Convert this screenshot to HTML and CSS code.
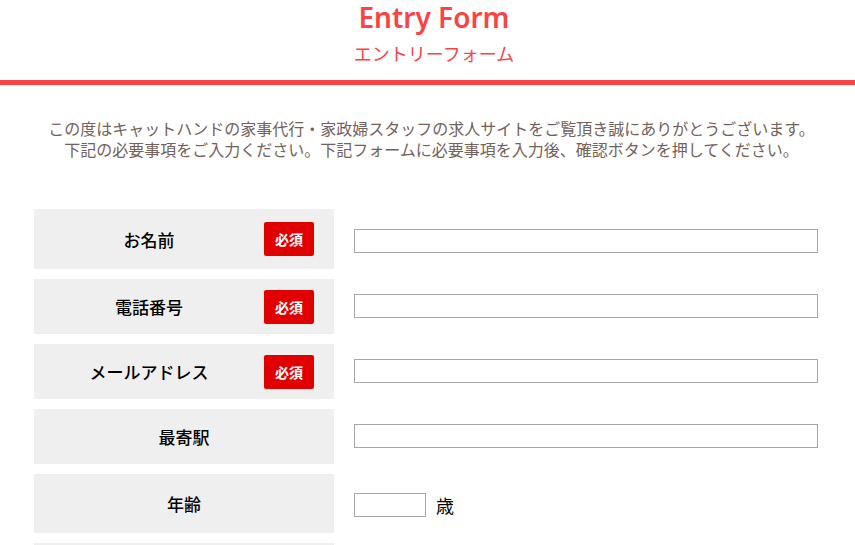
FILE: index.html
```html
<!DOCTYPE html>
<html lang="ja">
<head>
    <meta charset="UTF-8">
    <meta name="viewport" content="width=device-width, initial-scale=1.0">
    <title>Entry Form</title>
    <link rel="stylesheet" href="styles.css">
</head>
<body>
    <header class="page-header">
        <h1 class="title">Entry Form</h1>
        <p class="subtitle">エントリーフォーム</p>
    </header>

    <p class="intro">
        この度はキャットハンドの家事代行・家政婦スタッフの求人サイトをご覧頂き誠にありがとうございます。<br>
        下記の必要事項をご入力ください。下記フォームに必要事項を入力後、確認ボタンを押してください。
    </p>

    <form class="entry-form">
        <div class="form-row row-tall">
            <div class="form-label">
                <span class="label-text">お名前</span>
                <span class="required">必須</span>
            </div>
            <div class="form-field"><input type="text" class="text-input"></div>
        </div>
        <div class="form-row">
            <div class="form-label">
                <span class="label-text">電話番号</span>
                <span class="required">必須</span>
            </div>
            <div class="form-field"><input type="text" class="text-input"></div>
        </div>
        <div class="form-row">
            <div class="form-label">
                <span class="label-text">メールアドレス</span>
                <span class="required">必須</span>
            </div>
            <div class="form-field"><input type="text" class="text-input"></div>
        </div>
        <div class="form-row">
            <div class="form-label">
                <span class="label-text">最寄駅</span>
            </div>
            <div class="form-field"><input type="text" class="text-input"></div>
        </div>
        <div class="form-row row-age">
            <div class="form-label">
                <span class="label-text">年齢</span>
            </div>
            <div class="form-field">
                <input type="text" class="age-input">
                <span class="unit">歳</span>
            </div>
        </div>
        <div class="form-row">
            <div class="form-label">
                <span class="label-text">住所</span>
            </div>
            <div class="form-field"><input type="text" class="text-input"></div>
        </div>
    </form>
</body>
</html>
```

FILE: styles.css
```css
body {
    margin: 0;
    font-family: "Noto Sans CJK JP", sans-serif;
    color: #000;
    background-color: #fff;
}
.page-header {
    text-align: center;
    padding: 0 0 15px 13px;
    border-bottom: 5px solid #f84444;
}
.title {
    margin: 0;
    font-family: "Noto Sans", "Noto Sans CJK JP", sans-serif;
    font-size: 28px;
    font-weight: 600;
    line-height: 34px;
    color: #f84444;
}
.subtitle {
    margin: 7px 0 0;
    font-size: 18px;
    line-height: 24px;
    color: #f84444;
}
.intro {
    margin: 33px 0 49px;
    padding-left: 8px;
    text-align: center;
    font-size: 16px;
    line-height: 21px;
    color: #73615b;
}
.entry-form {
    margin-left: 34px;
    width: 804px;
}
.form-row {
    display: flex;
    height: 55px;
    margin-bottom: 10px;
}
.row-tall {
    height: 60px;
}
.row-age {
    height: 59px;
}
.form-label {
    display: flex;
    align-items: center;
    width: 300px;
    padding-right: 20px;
    box-sizing: border-box;
    background-color: #efefef;
}
.label-text {
    flex: 1;
    text-align: center;
    font-size: 17px;
    font-weight: 500;
}
.form-label .label-text:only-child {
    padding-left: 20px;
}
.required {
    width: 50px;
    height: 34px;
    line-height: 34px;
    text-align: center;
    background-color: #e00000;
    border-radius: 2px;
    color: #fff;
    font-size: 14px;
    font-weight: bold;
}
.form-field {
    flex: 1;
    display: flex;
    align-items: flex-end;
    padding: 0 20px 16px;
}
.text-input,
.age-input {
    height: 24px;
    box-sizing: border-box;
    border: 1px solid #a6a6a6;
    padding: 0 4px;
    font-size: 14px;
}
.text-input {
    width: 100%;
}
.age-input {
    width: 72px;
}
.unit {
    margin-left: 10px;
    font-size: 18px;
    line-height: 24px;
}
```
